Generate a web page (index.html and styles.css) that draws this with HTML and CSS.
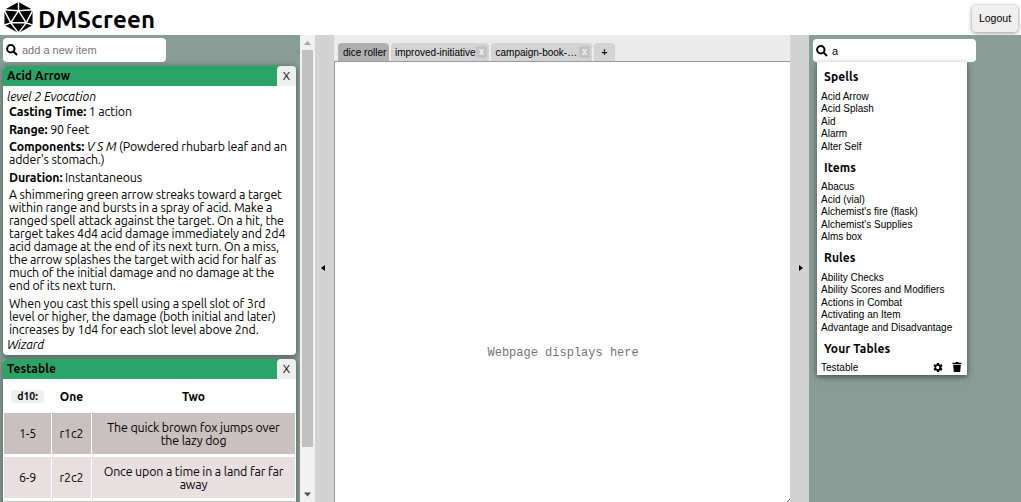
FILE: index.html
```html
<!DOCTYPE html>
<html lang="en">
<head>
<meta charset="utf-8">
<title>DMScreen</title>
<link rel="stylesheet" href="styles.css">
</head>
<body>
<header class="top">
  <svg class="logo" viewBox="0 0 32 34">
    <path class="solid" d="M16 1 30.500 9V25L16 33 1.500 25V9Z"/>
    <path class="edges" d="M16 0V10M16 10 8 22.500H24ZM1 9 16 10 31 9M1 9 8 22.500 1 25M31 9 24 22.500 31 25M8 22.500 16 33 24 22.500"/>
  </svg>
  <h1>DMScreen</h1>
  <button class="logout">Logout</button>
</header>
<main class="layout">
  <section class="left">
    <div class="search">
      <svg class="mag" viewBox="0 0 12 12"><circle cx="4.800" cy="4.800" r="3.700"/><path d="M7.500 7.500 11 11"/></svg>
      <span class="hint">add a new item</span>
    </div>
    <article class="card">
      <div class="bar"><h2>Acid Arrow</h2><button class="close">X</button></div>
      <div class="spell">
        <em class="level">level 2 Evocation</em>
        <p><b>Casting Time:</b> 1 action</p>
        <p><b>Range:</b> 90 feet</p>
        <p><b>Components:</b> <i>V S M</i> (Powdered rhubarb leaf and an<br>adder's stomach.)</p>
        <p><b>Duration:</b> Instantaneous</p>
        <p>A shimmering green arrow streaks toward a target<br>within range and bursts in a spray of acid. Make a<br>ranged spell attack against the target. On a hit, the<br>target takes 4d4 acid damage immediately and 2d4<br>acid damage at the end of its next turn. On a miss,<br>the arrow splashes the target with acid for half as<br>much of the initial damage and no damage at the<br>end of its next turn.</p>
        <p>When you cast this spell using a spell slot of 3rd<br>level or higher, the damage (both initial and later)<br>increases by 1d4 for each slot level above 2nd.</p>
        <em class="school">Wizard</em>
      </div>
    </article>
    <article class="card">
      <div class="bar"><h2>Testable</h2><button class="close">X</button></div>
      <div class="grid">
        <div class="th"><span class="die">d10:</span></div><div class="th">One</div><div class="th">Two</div>
        <div class="td odd">1-5</div><div class="td odd">r1c2</div><div class="td odd">The quick brown fox jumps over<br>the lazy dog</div>
        <div class="td">6-9</div><div class="td">r2c2</div><div class="td">Once upon a time in a land far far<br>away</div>
        <div class="td odd"></div><div class="td odd"></div><div class="td odd"></div>
      </div>
    </article>
  </section>
  <div class="scroll">
    <svg viewBox="0 0 15 15"><path fill="#a3a3a3" d="M4 10 7.500 6 11 10Z"/></svg>
    <div class="thumb"></div>
    <svg viewBox="0 0 15 15"><path fill="#505050" d="M4 5.500H11L7.500 9.500Z"/></svg>
  </div>
  <div class="gutter before"><svg viewBox="0 0 4 6"><path d="M4 0V6L0 3Z"/></svg></div>
  <section class="center">
    <nav class="tabs">
      <div class="tab active">dice roller</div>
      <div class="tab initiative">improved-initiative<span class="x">x</span></div>
      <div class="tab book">campaign-book-…<span class="x">x</span></div>
      <div class="tab plus">+</div>
    </nav>
    <div class="page"><span>Webpage displays here</span><svg class="grip" viewBox="0 0 3 3"><path d="M0 3 3 0"/></svg></div>
  </section>
  <div class="gutter after"><svg viewBox="0 0 4 6"><path d="M0 0V6L4 3Z"/></svg></div>
  <section class="right">
    <div class="search">
      <svg class="mag" viewBox="0 0 12 12"><circle cx="4.800" cy="4.800" r="3.700"/><path d="M7.500 7.500 11 11"/></svg>
      <span>a</span>
    </div>
    <div class="results">
      <h3>Spells</h3>
      <ul><li>Acid Arrow</li><li>Acid Splash</li><li>Aid</li><li>Alarm</li><li>Alter Self</li></ul>
      <h3>Items</h3>
      <ul><li>Abacus</li><li>Acid (vial)</li><li>Alchemist's fire (flask)</li><li>Alchemist's Supplies</li><li>Alms box</li></ul>
      <h3>Rules</h3>
      <ul><li>Ability Checks</li><li>Ability Scores and Modifiers</li><li>Actions in Combat</li><li>Activating an Item</li><li>Advantage and Disadvantage</li></ul>
      <h3>Your Tables</h3>
      <ul><li class="own">Testable
        <svg class="gear" viewBox="2 2 20 20"><path d="M19.140 12.940c.04-.3.060-.61.060-.94s-.02-.64-.07-.94l2.030-1.580-1.920-3.320-2.390.96c-.5-.38-1.030-.7-1.620-.94L14.870 3.600h-3.840l-.36 2.580c-.59.240-1.130.57-1.620.94l-2.390-.96-1.920 3.320 2.030 1.580c-.05.3-.09.630-.09.940s.02.640.07.940l-2.030 1.580 1.920 3.320 2.390-.96c.5.380 1.030.7 1.620.94l.36 2.580h3.840l.36-2.580c.59-.24 1.130-.56 1.620-.94l2.390.96 1.920-3.320ZM12.500 15a3 3 0 1 1 0-6 3 3 0 0 1 0 6Z"/></svg>
        <svg class="trash" viewBox="0 0 10 10"><path d="M.5.8H3.200L3.800 0H6.200L6.800.8H9.500V2.200H.5ZM1.200 3H8.800L8.200 10H1.800Z"/></svg>
      </li></ul>
    </div>
  </section>
</main>
</body>
</html>
```
FILE: styles.css
```css
* { box-sizing: border-box; }
body { margin: 0; height: 502px; overflow: hidden; background: #fff; color: #000; font-family: Ubuntu, "Noto Sans", sans-serif; font-size: 12.400px; }
h1, h2, h3, p, ul { margin: 0; padding: 0; }
button { border: 0; padding: 0; background: #efefef; color: #000; }
svg { display: block; flex: none; }
.top { height: 35px; display: flex; align-items: flex-start; padding: 1px 3px 0; }
.logo { width: 31px; height: 33px; }
.solid { fill: #000; }
.edges { fill: none; stroke: #fff; stroke-width: 1.5; }
h1 { margin: 2px 0 0 4px; font-size: 24px; line-height: 34px; letter-spacing: .2px; }
.logout { margin: 4px 0 0 auto; width: 46px; height: 27px; padding-bottom: 1px; border-radius: 4px; box-shadow: 0 1px 4px rgba(0,0,0,.45); font: 10.500px "Liberation Sans", sans-serif; }
.layout { display: flex; height: 467px; }
.left { width: 300px; padding: 3px 4px 0 3px; background: #889d96; overflow: hidden; }
.search { display: flex; align-items: center; gap: 4px; width: 163px; height: 24px; padding-left: 3px; background: #fff; border-radius: 4px; font: 11px "Liberation Sans", sans-serif; }
.mag { width: 12px; height: 12px; fill: none; stroke: #000; stroke-width: 2; }
.hint { color: #757575; }
.card { margin-top: 4px; border-radius: 4px; background: #fff; box-shadow: 0 1px 6px rgba(0,0,0,.45); }
.bar { display: flex; height: 20px; padding-left: 4px; border-radius: 4px 4px 0 0; background: #2ba567; }
h2 { flex: 1; font-size: 12px; line-height: 19px; letter-spacing: .1px; }
.close { width: 19px; height: 20px; padding-bottom: 1px; border-radius: 4px 4px 0 0; font: 12px Ubuntu, "Noto Sans", sans-serif; }
.spell { height: 269px; padding: 4px 6px 0; line-height: 13px; white-space: nowrap; letter-spacing: -.14px; }
.spell em { display: block; margin-left: -2px; }
.level { margin-bottom: 2px; }
.spell p { margin-bottom: 4.500px; }
.spell p + em { margin-top: -2.500px; }
.grid { display: grid; grid-template-columns: 47px 39px 203px; grid-template-rows: 31px 41px 41px 41px; gap: 3px 1px; padding: 0 1px; line-height: 13px; white-space: nowrap; text-align: center; }
.th, .td { display: flex; align-items: center; justify-content: center; }
.th { padding-top: 3px; font-size: 12px; font-weight: bold; }
.td { background: #e8dfe0; letter-spacing: -.14px; }
.odd { background: #c8c1c0; }
.die { width: 33px; height: 13px; border-radius: 3px; background: #efefef; font-size: 10.500px; line-height: 13px; }
.scroll { display: flex; flex-direction: column; width: 15px; background: #f1f1f1; }
.scroll svg { width: 15px; height: 15px; }
.thumb { width: 11px; height: 397px; margin: 0 2px 40px; background: #c1c1c1; }
.gutter { display: flex; align-items: center; justify-content: center; width: 19px; padding-bottom: 1px; background: #d3d3d3; }
.gutter svg { width: 4px; height: 6px; }
.before { padding-right: 3px; }
.after { padding-left: 2px; }
.center { width: 456px; display: flex; flex-direction: column; background: #ebebeb; }
.tabs { display: flex; gap: 2px; height: 26px; padding: 8px 0 0 4px; font: 10px "Liberation Sans", sans-serif; }
.tab { display: flex; align-items: center; height: 18px; padding-left: 4px; border-radius: 4px 4px 0 0; background: #d3d3d3; white-space: nowrap; }
.active { width: 51px; padding-left: 5px; background: #afafaf; }
.initiative { width: 98px; }
.book { width: 101px; padding-left: 4.500px; }
.plus { width: 21px; padding: 0; justify-content: center; font-weight: bold; }
.x { width: 11px; height: 12px; margin: 0 2px 0 auto; border-radius: 3px; background: #c3c3c3; color: #fff; line-height: 11px; text-align: center; }
.page { position: relative; flex: 1; padding: 284px 0 0 152.500px; border: solid #999; border-width: 1px 0 0 1px; background: #fff; color: #757575; font: 12px/14px "Liberation Mono", monospace; }
.grip { position: absolute; right: 0; bottom: 0; width: 3px; height: 3px; stroke: #555; }
.right { width: 212px; padding: 4px 0 0 4px; background: #889d96; }
.right .search { height: 23px; }
.results { width: 150px; height: 313px; margin-left: 4px; background: #fff; box-shadow: 0 2px 6px rgba(0,0,0,.5); font: 10px "Liberation Sans", sans-serif; }
h3 { height: 28px; padding-left: 7px; font: bold 12px/29.400px Ubuntu, "Noto Sans", sans-serif; letter-spacing: .1px; }
ul { margin: -.3px 0 .3px; list-style: none; }
li { height: 12.500px; padding-left: 4px; line-height: 13px; white-space: nowrap; }
.own { display: flex; align-items: center; }
.gear { width: 11px; height: 11px; margin-left: auto; }
.trash { width: 10px; height: 10px; margin: 0 5px 0 9px; }
```
